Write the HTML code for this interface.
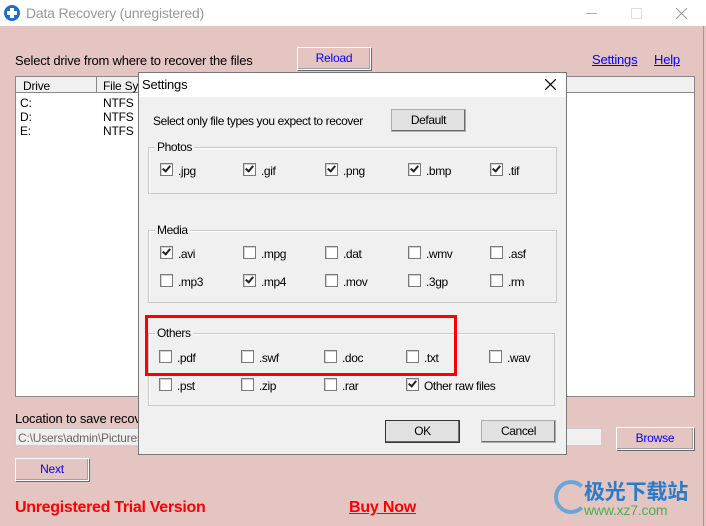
<html><head><style>
body{margin:0;width:706px;height:526px;overflow:hidden;background:#e4c5c2;font-family:"Liberation Sans",Arial,sans-serif;font-size:12px;position:relative;letter-spacing:-0.2px}
.a{position:absolute;white-space:nowrap}
.btn{position:absolute;border:1px solid #adadad;box-shadow:inset -1px -1px #6a6a6a;background:#e1e1e1;text-align:center;box-sizing:border-box}
.pb{background:#e4c5c2;color:#0000ff;border:1px solid #fff;box-shadow:1px 1px #6a6a6a,inset -1px -1px #a0a0a0}
.cb{position:absolute;width:11px;height:11px;border:1px solid #7a7a7a;background:#fff;box-shadow:inset 1px 1px #d0d0d0}
.cb.c::after{content:"";position:absolute;left:3px;top:0px;width:3px;height:6px;border:solid #222;border-width:0 2px 2px 0;transform:rotate(40deg)}
.gb{position:absolute;border:1px solid #c8c8c8;box-shadow:inset 1px 1px #fff}
.gl{position:absolute;top:-8px;left:6px;background:#f0f0f0;padding:0 2px}
.dl{letter-spacing:-0.4px}
</style></head><body>
<div class="a" style="left:0;top:0;width:706px;height:26px;background:#fff"></div>
<div class="a" style="left:4px;top:5px;width:16px;height:16px;border-radius:50%;background:#1e6fc8"></div>
<div class="a" style="left:10px;top:8px;width:4px;height:10px;background:#fff"></div>
<div class="a" style="left:7px;top:11px;width:10px;height:4px;background:#fff"></div>
<div class="a" style="left:26px;top:5px;font-size:14px;color:#999">Data Recovery (unregistered)</div>
<div class="a" style="left:586px;top:13px;width:11px;height:1px;background:#aaa"></div>
<div class="a" style="left:631px;top:8px;width:9px;height:9px;border:1px solid #ddd"></div>
<svg class="a" style="left:676px;top:8px" width="11" height="11"><path d="M0 0L11 11M11 0L0 11" stroke="#999" stroke-width="1"/></svg>
<div class="a" style="left:703px;top:26px;width:1px;height:500px;background:#999"></div>
<div class="a" style="left:15px;top:53px;font-size:13px">Select drive from where to recover the files</div>
<div class="btn pb" style="left:297px;top:47px;width:74px;height:23px;line-height:21px">Reload</div>
<div class="a" style="left:592px;top:52px;font-size:13px;color:#00f;text-decoration:underline">Settings</div>
<div class="a" style="left:654px;top:52px;font-size:13px;color:#00f;text-decoration:underline">Help</div>
<div class="a" style="left:15px;top:76px;width:678px;height:319px;background:#fff;border:1px solid #888"></div>
<div class="a" style="left:16px;top:77px;width:678px;height:15px;background:#f0f0f0;border-bottom:1px solid #888"></div>
<div class="a" style="left:96px;top:77px;width:1px;height:15px;background:#888"></div>
<div class="a" style="left:23px;top:79px">Drive</div>
<div class="a" style="left:103px;top:79px">File Sys</div>
<div class="a" style="left:20px;top:96px;line-height:14px">C:<br>D:<br>E:</div>
<div class="a" style="left:103px;top:96px;line-height:14px">NTFS<br>NTFS<br>NTFS</div>
<div class="a" style="left:15px;top:411px;font-size:13px">Location to save recove</div>
<div class="a" style="left:15px;top:428px;width:587px;height:18px;background:#f0f0f0;border:1px solid #ccc;color:#666;line-height:18px;padding-left:2px;box-sizing:border-box">C:\Users\admin\Pictures</div>
<div class="btn pb" style="left:616px;top:427px;width:78px;height:23px;line-height:21px">Browse</div>
<div class="btn pb" style="left:15px;top:458px;width:74px;height:23px;line-height:21px">Next</div>
<div class="a" style="left:15px;top:499px;font-size:16px;font-weight:bold;color:#f00;letter-spacing:-0.3px">Unregistered Trial Version</div>
<div class="a" style="left:349px;top:499px;font-size:16px;font-weight:bold;color:#f00;text-decoration:underline">Buy Now</div>
<div class="a" style="top:476px;font-size:21px;font-weight:bold;color:#2a7bc9;font-family:'Noto Sans CJK SC',sans-serif;left:584px">极光下载站</div>
<div class="a" style="left:584px;top:502px;font-size:14px;color:#4caf50">www.xz7.com</div>
<div class="a" style="left:554px;top:480px;width:26px;height:26px;border-radius:50%;border:4px solid #4aa0e0;border-right-color:transparent;opacity:.8"></div>
<!-- dialog -->
<div class="a" style="left:138px;top:72px;width:429px;height:383px;background:#f0f0f0;border:1px solid #777;box-sizing:border-box"></div>
<div class="a" style="left:139px;top:73px;width:427px;height:24px;background:#fff"></div>
<div class="a" style="left:142px;top:77px;font-size:13px">Settings</div>
<svg class="a" style="left:545px;top:79px" width="11" height="11"><path d="M0 0L11 11M11 0L0 11" stroke="#000" stroke-width="1.2"/></svg>
<div class="dl">
<div class="a" style="left:153px;top:114px">Select only file types you expect to recover</div>
<div class="btn" style="left:391px;top:109px;width:75px;height:23px;line-height:21px">Default</div>
<div class="gb" style="left:148px;top:147px;width:407px;height:45px"><span class="gl">Photos</span></div>
<div class="gb" style="left:148px;top:230px;width:407px;height:71px"><span class="gl">Media</span></div>
<div class="gb" style="left:148px;top:333px;width:405px;height:71px"><span class="gl">Others</span></div>
<div class="cb c" style="left:160px;top:163px"></div><div class="a" style="left:178px;top:164px">.jpg</div>
<div class="cb c" style="left:243px;top:163px"></div><div class="a" style="left:261px;top:164px">.gif</div>
<div class="cb c" style="left:325px;top:163px"></div><div class="a" style="left:343px;top:164px">.png</div>
<div class="cb c" style="left:408px;top:163px"></div><div class="a" style="left:426px;top:164px">.bmp</div>
<div class="cb c" style="left:490px;top:163px"></div><div class="a" style="left:508px;top:164px">.tif</div>
<div class="cb c" style="left:160px;top:246px"></div><div class="a" style="left:178px;top:247px">.avi</div>
<div class="cb" style="left:243px;top:246px"></div><div class="a" style="left:261px;top:247px">.mpg</div>
<div class="cb" style="left:325px;top:246px"></div><div class="a" style="left:343px;top:247px">.dat</div>
<div class="cb" style="left:408px;top:246px"></div><div class="a" style="left:426px;top:247px">.wmv</div>
<div class="cb" style="left:490px;top:246px"></div><div class="a" style="left:508px;top:247px">.asf</div>
<div class="cb" style="left:160px;top:274px"></div><div class="a" style="left:178px;top:275px">.mp3</div>
<div class="cb c" style="left:243px;top:274px"></div><div class="a" style="left:261px;top:275px">.mp4</div>
<div class="cb" style="left:325px;top:274px"></div><div class="a" style="left:343px;top:275px">.mov</div>
<div class="cb" style="left:408px;top:274px"></div><div class="a" style="left:426px;top:275px">.3gp</div>
<div class="cb" style="left:490px;top:274px"></div><div class="a" style="left:508px;top:275px">.rm</div>
<div class="cb" style="left:159px;top:350px"></div><div class="a" style="left:177px;top:351px">.pdf</div>
<div class="cb" style="left:241px;top:350px"></div><div class="a" style="left:259px;top:351px">.swf</div>
<div class="cb" style="left:324px;top:350px"></div><div class="a" style="left:342px;top:351px">.doc</div>
<div class="cb" style="left:406px;top:350px"></div><div class="a" style="left:424px;top:351px">.txt</div>
<div class="cb" style="left:489px;top:350px"></div><div class="a" style="left:507px;top:351px">.wav</div>
<div class="cb" style="left:159px;top:378px"></div><div class="a" style="left:177px;top:379px">.pst</div>
<div class="cb" style="left:241px;top:378px"></div><div class="a" style="left:259px;top:379px">.zip</div>
<div class="cb" style="left:324px;top:378px"></div><div class="a" style="left:342px;top:379px">.rar</div>
<div class="cb c" style="left:406px;top:378px"></div><div class="a" style="left:424px;top:379px">Other raw files</div>
<div class="btn" style="left:385px;top:420px;width:75px;height:23px;line-height:21px;border-color:#333">OK</div>
<div class="btn" style="left:481px;top:420px;width:75px;height:23px;line-height:21px">Cancel</div>
</div>
<div class="a" style="left:145px;top:315px;width:312px;height:61px;border:3px solid #f00;box-sizing:border-box"></div>
</body></html>
